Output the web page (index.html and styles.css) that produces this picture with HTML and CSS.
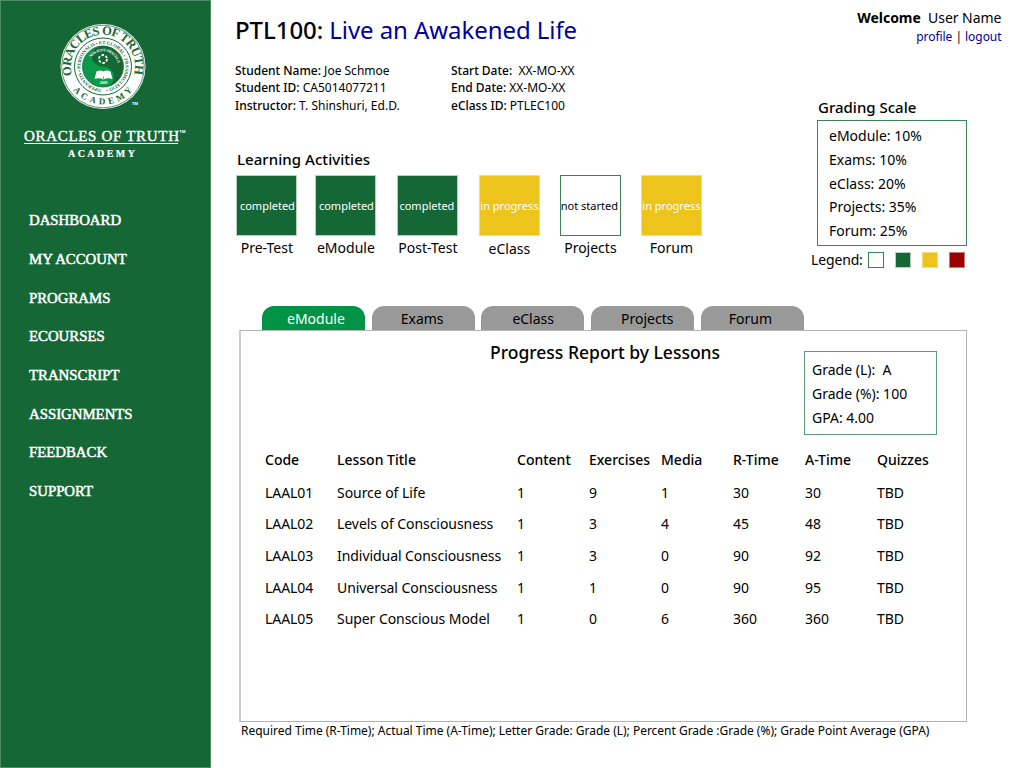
FILE: index.html
```html
<!DOCTYPE html>
<html lang="en">
<head>
<meta charset="utf-8">
<title>Oracles of Truth Academy</title>
<link rel="stylesheet" href="styles.css">
</head>
<body>
<aside class="sidebar">
  <svg class="logo" width="210" height="165" viewBox="0 0 210 165">
    <defs>
      <path id="arc-name" d="M72.2 75.3A32 32 0 1 1 133.800 75.3"/>
      <path id="arc-academy" d="M73.1 89.9A38 38 0 0 0 132.900 89.9"/>
      <path id="arc-motto" d="M101 88.9A22.5 22.5 0 1 1 105 88.9"/>
      <path id="arc-inner" d="M91 57.5A15 15 0 0 1 117.500 70.500"/>
    </defs>
    <circle cx="103" cy="66.5" r="42.5" fill="#fff"/>
    <circle cx="103" cy="66.5" r="41.300" fill="none" stroke="#166736" stroke-width=".7"/>
    <circle cx="103" cy="66.5" r="28.500" fill="#fff" stroke="#166736" stroke-width="1"/>
    <circle cx="103" cy="66.5" r="20.500" fill="#0b9a48" stroke="#166736" stroke-width=".8"/>
    <path d="M99 46.400A20.500 20.500 0 0 1 107 86.600C118 82 116 68 103 66.5C90 65 87 51 99 46.400Z" fill="#166736"/>
    <circle cx="103" cy="59" r="4" fill="none" stroke="#fff" stroke-width="1.800" stroke-dasharray="2.6 1.6"/>
    <path d="M96.500 71.500Q100.500 69.500 103.500 71.500Q106.500 69.500 110.500 71.500L112.500 79Q107.500 77.500 103.500 79.500Q99.500 77.500 94.500 79Z" fill="#fff"/>
    <path d="M103.500 76.500V79" stroke="#166736" stroke-width=".6"/>
    <text class="seal-name"><textPath href="#arc-name" textLength="117">ORACLES OF TRUTH</textPath></text>
    <text class="seal-academy"><textPath href="#arc-academy" textLength="68">ACADEMY</textPath></text>
    <text class="seal-motto"><textPath href="#arc-motto" textLength="136">OPERANTIS • PERSONALIS • ET GLOBAL • TRANSMUTATIO •</textPath></text>
    <text class="seal-inner"><textPath href="#arc-inner" textLength="34">NOS SUNT ORACULA</textPath></text>
    <text class="seal-year" x="99.500" y="84">2009</text>
    <text class="seal-tm" x="132" y="105">TM</text>
    <text class="word-name" x="24" y="141" textLength="155">ORACLES OF TRUTH</text>
    <text class="seal-tm" x="179.500" y="133">TM</text>
    <path d="M24 143.500H178" stroke="#fff"/>
    <text class="word-academy" x="68" y="156.500" textLength="67">ACADEMY</text>
  </svg>
  <nav class="nav">
    <a>DASHBOARD</a><a>MY ACCOUNT</a><a>PROGRAMS</a><a>ECOURSES</a><a>TRANSCRIPT</a><a>ASSIGNMENTS</a><a>FEEDBACK</a><a>SUPPORT</a>
  </nav>
</aside>
<main class="main">
  <div class="top">
    <section class="course">
      <h1 class="title"><b>PTL100:</b> <span>Live an Awakened Life</span></h1>
      <div class="meta">
        <div><p><b>Student Name:</b> Joe Schmoe</p><p><b>Student ID:</b> CA5014077211</p><p><b>Instructor:</b> T. Shinshuri, Ed.D.</p></div>
        <div><p><b>Start Date:</b>&nbsp; XX-MO-XX</p><p><b>End Date:</b> XX-MO-XX</p><p><b>eClass ID:</b> PTLEC100</p></div>
      </div>
      <h2 class="heading">Learning Activities</h2>
      <div class="tiles">
        <div class="tile"><div class="box done first">completed</div><p>Pre-Test</p></div>
        <div class="tile"><div class="box done first">completed</div><p>eModule</p></div>
        <div class="tile"><div class="box done snug">completed</div><p>Post-Test</p></div>
        <div class="tile"><div class="box progress">in progress</div><p class="low">eClass</p></div>
        <div class="tile"><div class="box none">not started</div><p>Projects</p></div>
        <div class="tile"><div class="box progress">in progress</div><p>Forum</p></div>
      </div>
    </section>
    <section class="side">
      <p class="welcome"><b>Welcome</b>&nbsp; User Name</p>
      <p class="links"><a>profile</a> | <a>logout</a></p>
      <h2 class="heading scale-title">Grading Scale</h2>
      <div class="scale"><p>eModule: 10%</p><p>Exams: 10%</p><p>eClass: 20%</p><p>Projects: 35%</p><p>Forum: 25%</p></div>
      <div class="legend"><span>Legend:</span><i class="none"></i><i class="done"></i><i class="progress"></i><i class="late"></i></div>
    </section>
  </div>
  <div class="tabs"><div class="tab active">eModule</div><div class="tab exams">Exams</div><div class="tab eclass">eClass</div><div class="tab projects">Projects</div><div class="tab forum">Forum</div></div>
  <section class="panel">
    <div class="report">
      <h2>Progress Report by Lessons</h2>
      <div class="grades"><p>Grade (L):&nbsp; A</p><p>Grade (%): 100</p><p>GPA: 4.00</p></div>
    </div>
    <table class="lessons">
      <thead><tr><th>Code</th><th class="wide">Lesson Title</th><th>Content</th><th>Exercises</th><th>Media</th><th>R-Time</th><th>A-Time</th><th>Quizzes</th></tr></thead>
      <tbody>
        <tr><td>LAAL01</td><td>Source of Life</td><td>1</td><td>9</td><td>1</td><td>30</td><td>30</td><td>TBD</td></tr>
        <tr><td>LAAL02</td><td>Levels of Consciousness</td><td>1</td><td>3</td><td>4</td><td>45</td><td>48</td><td>TBD</td></tr>
        <tr><td>LAAL03</td><td>Individual Consciousness</td><td>1</td><td>3</td><td>0</td><td>90</td><td>92</td><td>TBD</td></tr>
        <tr><td>LAAL04</td><td>Universal Consciousness</td><td>1</td><td>1</td><td>0</td><td>90</td><td>95</td><td>TBD</td></tr>
        <tr><td>LAAL05</td><td>Super Conscious Model</td><td>1</td><td>0</td><td>6</td><td>360</td><td>360</td><td>TBD</td></tr>
      </tbody>
    </table>
  </section>
  <p class="note">Required Time (R-Time); Actual Time (A-Time); Letter Grade: Grade (L); Percent Grade :Grade (%); Grade Point Average (GPA)</p>
</main>
</body>
</html>
```
FILE: styles.css
```css
* { box-sizing: border-box; margin: 0; padding: 0; }
body { display: flex; width: 1024px; height: 768px; overflow: hidden; background: #fff; color: #000; font: 14px/24px "Noto Sans", "Open Sans", sans-serif; white-space: nowrap; }
b, th { font-weight: 500; }

.sidebar { width: 211px; height: 768px; flex: none; background: #166736; border: 1px solid #4d8c66; color: #fff; }
.logo { display: block; margin: -1px 0 0 -1px; }
.logo text { font-family: "Liberation Serif", serif; fill: #fff; }
.logo .seal-name { font-size: 12.500px; font-weight: bold; fill: #166736; }
.logo .seal-academy { font-size: 9px; font-weight: bold; fill: #166736; }
.logo .seal-motto { font-size: 4.700px; font-weight: bold; fill: #166736; }
.logo .seal-inner { font-size: 3.800px; font-weight: bold; }
.logo .seal-year { font-size: 4px; font-weight: bold; }
.logo .seal-tm { font-size: 4px; font-family: "Noto Sans", sans-serif; font-weight: bold; }
.logo .word-name { font-size: 15px; stroke: #fff; stroke-width: .4px; }
.logo .word-academy { font-size: 10px; font-weight: bold; stroke: #fff; stroke-width: .2px; }
.nav { display: flex; flex-direction: column; padding: 36.300px 0 0 28px; }
.nav a { height: 38.700px; line-height: 38.700px; font-family: "Liberation Serif", serif; font-size: 14.800px; -webkit-text-stroke: .5px #fff; }

.main { width: 813px; flex: none; }
.top { display: flex; justify-content: space-between; height: 306px; }
.course { padding: 14px 0 0 24px; }
.title { font-size: 24px; line-height: 32px; font-weight: 400; letter-spacing: -.07px; }
.title span { color: #00009b; }
.meta { display: grid; grid-template-columns: 216px 216px; padding-top: 16px; font-size: 12px; line-height: 17.300px; }
.heading { font-size: 15px; line-height: 24px; font-weight: 500; }
.course .heading { margin: 33.100px 0 0 2px; letter-spacing: .05px; }
.tiles { display: grid; grid-template-columns: 79px 82px 81.500px 81px 81px 61px; padding: 4px 0 0 1.400px; }
.tile { width: 61px; text-align: center; }
.box { height: 61px; border: 1px solid; line-height: 59px; font-size: 11px; color: #fff; display: flex; justify-content: center; }
.box.first { padding-left: 1px; }
.box.snug { padding-right: 2px; }
.box.none { padding-right: 2px; }
.low { padding-top: 1px; }
.done { background: #166736; border-color: #b6d0c0; }
.progress { background: #edc41c; border-color: #f5dc78; }
.none { background: #fff; border-color: #3d8259; color: #000; }
.side { width: 213px; padding-top: 6px; }
.welcome { text-align: right; padding-right: 22.500px; letter-spacing: -.03px; }
.welcome b { font-weight: 700; }
.links { text-align: right; padding-right: 22.500px; font-size: 12px; line-height: 14px; letter-spacing: -.05px; }
.links a { color: #00009b; }
.scale-title { margin: 51px 0 0 7px; }
.scale { width: 150px; height: 126px; margin: 1px 0 0 6px; padding: 3px 11px; border: 1px solid #3d8259; line-height: 23.800px; }
.legend { display: flex; align-items: center; height: 28px; }
.legend span { width: 57px; letter-spacing: -.15px; }
.legend i { width: 16px; height: 16px; margin-right: 11px; border-width: 1px; border-style: solid; }
.late { background: #9b0000; border-color: #c77; }

.tabs { display: flex; gap: 6.700px; padding-left: 51px; }
.tab { width: 103px; height: 24px; padding-left: 25px; border-radius: 12px 12px 0 0; background: #999; line-height: 26px; }
.active { background: #009345; color: #fff; }
.exams { padding-left: 29px; }
.eclass { padding-left: 31px; }
.projects { padding-left: 30px; }
.forum { padding-left: 28px; }
.panel { width: 728px; height: 392px; margin-left: 28px; border: 1px solid #b3b3b3; border-left: 2px solid #ccc; }
.report { display: flex; justify-content: space-between; height: 103px; padding: 9px 29px 0 249px; }
.report h2 { font-size: 17.500px; font-weight: 500; line-height: 24px; }
.grades { width: 133px; height: 84px; margin-top: 11px; padding: 6px 7px; border: 1px solid #5b9b77; }
.lessons { width: 684px; margin: 9px 0 0 24px; table-layout: fixed; border-collapse: collapse; letter-spacing: -.06px; }
.lessons th { width: 72px; height: 33px; text-align: left; letter-spacing: 0; }
.lessons th.wide { width: 180px; }
.lessons td { height: 31.600px; padding-top: 2px; }
.note { padding-left: 30px; font-size: 12px; line-height: 18px; letter-spacing: -.015px; }
```
